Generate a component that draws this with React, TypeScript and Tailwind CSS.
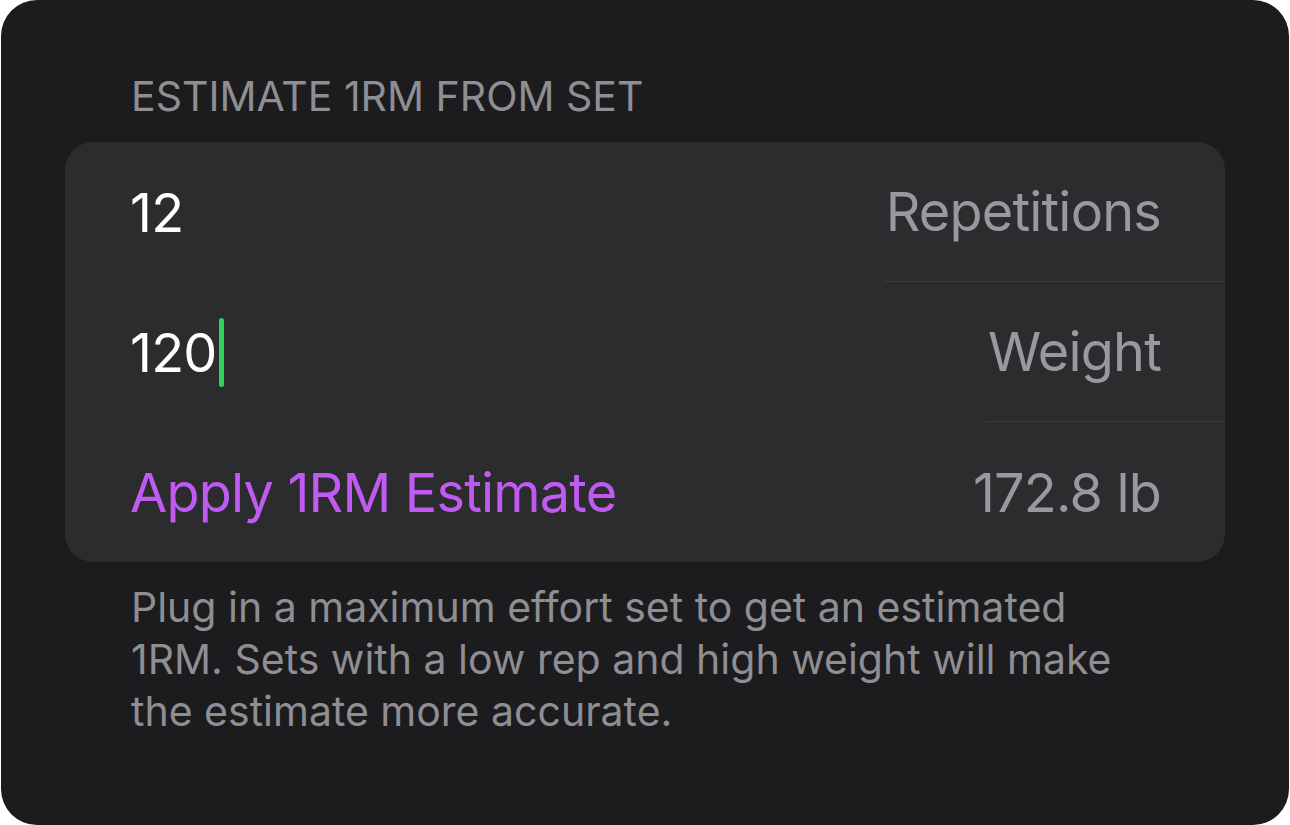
import React from 'react';

const font = { fontFamily: 'Inter, "Noto Sans", sans-serif' };

interface RowProps {
  value: React.ReactNode;
  label: string;
  divider?: boolean;
  valueClass?: string;
}

const Row: React.FC<RowProps> = ({ value, label, divider, valueClass }) => (
  <div className="flex h-[140px] items-stretch text-[54px] tracking-[-0.015em]">
    <div className={`flex flex-1 items-center pl-[65px] ${valueClass ?? 'text-white'}`}>{value}</div>
    <div
      className={`flex items-center pl-[3px] pr-[64px] text-[#98989e] ${
        divider ? 'border-b border-[#3b3b3e]' : ''
      }`}
    >
      {label}
    </div>
  </div>
);

export default function App() {
  return (
    <div className="min-h-[825px] bg-white" style={font}>
      <div className="mx-px h-[825px] rounded-[36px] bg-[#1c1c1e] pt-[72px]">
        <div className="pl-[130px] text-[41px] leading-[49px] text-[#8e8e93]">ESTIMATE 1RM FROM SET</div>

        <div className="mx-[64px] mt-[21px] overflow-hidden rounded-[28px] bg-[#2c2c2e]">
          <Row value="12" label="Repetitions" divider />
          <Row
            value={
              <span className="flex items-center">
                120
                <span className="ml-[2px] h-[69px] w-[5px] rounded-full bg-[#2dd15d]" />
              </span>
            }
            label="Weight"
            divider
          />
          <Row value="Apply 1RM Estimate" label="172.8 lb" valueClass="text-[#bf5af2]" />
        </div>

        <p className="mt-[19px] max-w-[1120px] pl-[130px] text-[41px] leading-[52px] text-[#8e8e93]">
          Plug in a maximum effort set to get an estimated 1RM. Sets with a low rep and high weight will make
          the estimate more accurate.
        </p>
      </div>
    </div>
  );
}
